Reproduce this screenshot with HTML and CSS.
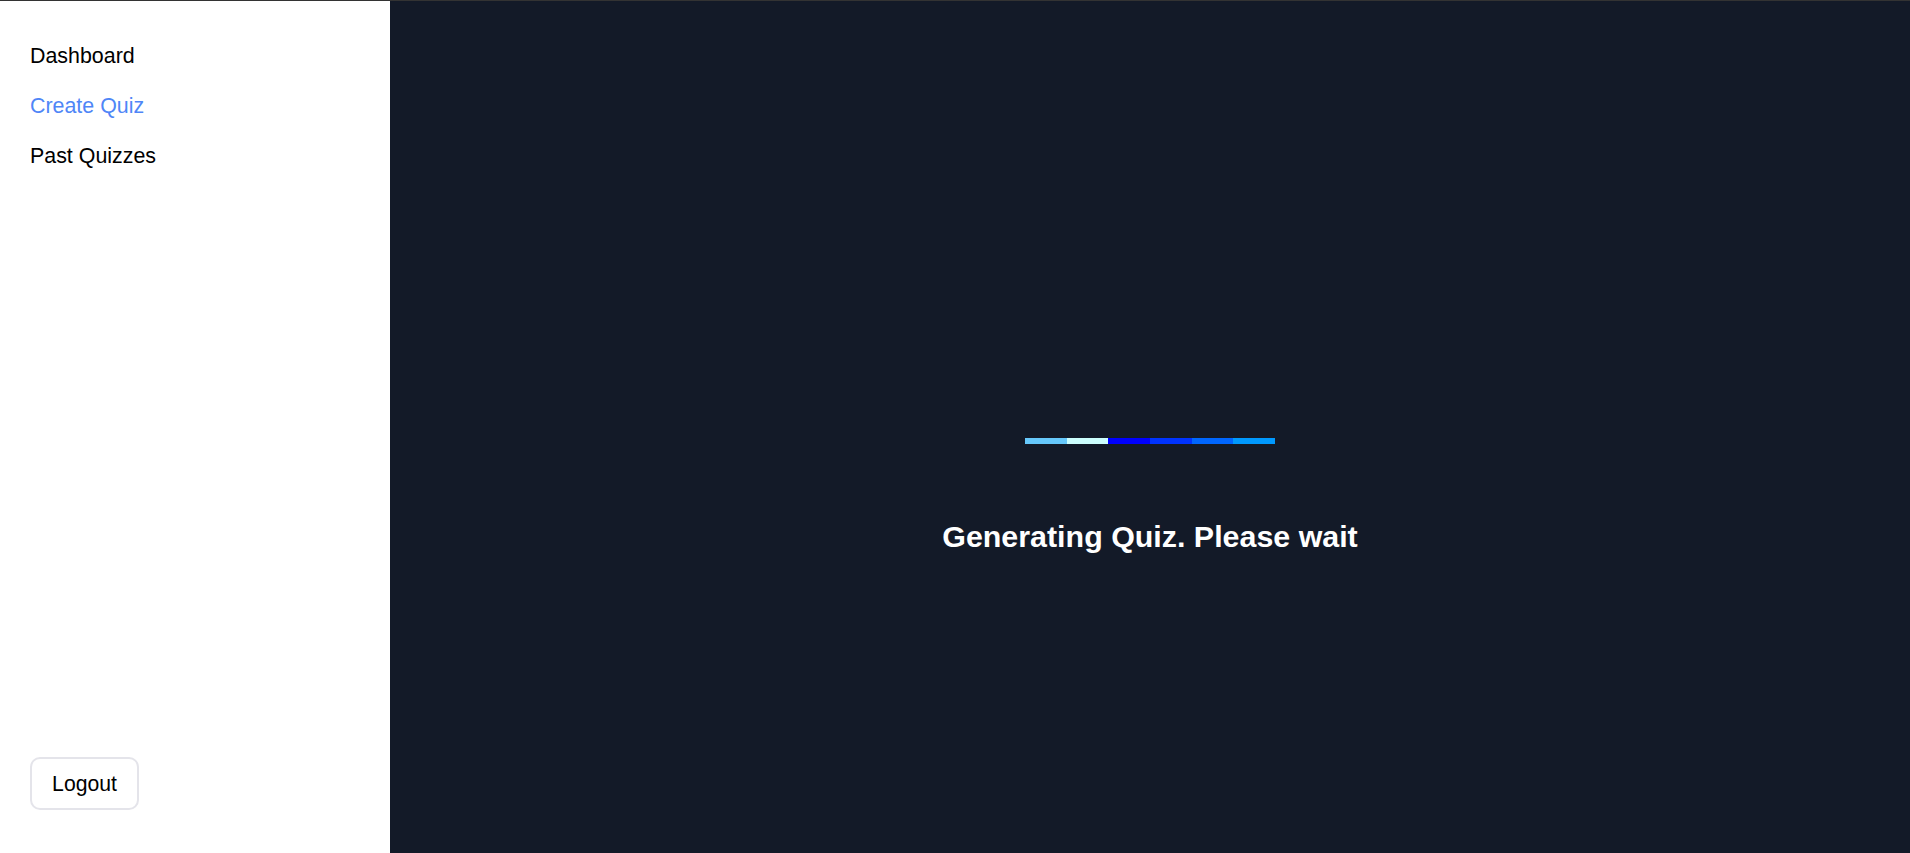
FILE: index.html
```html
<!DOCTYPE html>
<html lang="en">
<head>
<meta charset="utf-8">
<title>Create Quiz</title>
<link rel="stylesheet" href="styles.css">
</head>
<body>
<div class="app">
  <aside class="sidebar">
    <nav class="nav">
      <a class="nav-link" href="#">Dashboard</a>
      <a class="nav-link active" href="#">Create Quiz</a>
      <a class="nav-link" href="#">Past Quizzes</a>
    </nav>
    <button class="logout" type="button">Logout</button>
  </aside>
  <main class="main">
    <div class="loader">
      <span class="seg s1"></span><span class="seg s2"></span><span class="seg s3"></span><span class="seg s4"></span><span class="seg s5"></span><span class="seg s6"></span>
    </div>
    <h1 class="status">Generating Quiz. Please wait</h1>
  </main>
</div>
</body>
</html>
```
FILE: styles.css
```css
* { box-sizing: border-box; }
html, body { margin: 0; padding: 0; height: 100%; }
body {
  font-family: "Liberation Sans", Arial, sans-serif;
  background: #131a28;
  border-top: 1px solid #333333;
  overflow: hidden;
}
.app {
  display: flex;
  height: 852px;
}
.sidebar {
  width: 390px;
  flex-shrink: 0;
  background: #ffffff;
  display: flex;
  flex-direction: column;
  justify-content: space-between;
  padding: 43px 30px 43px 30px;
}
.nav {
  display: flex;
  flex-direction: column;
  gap: 26px;
}
.nav-link {
  font-size: 21.4px;
  line-height: 24px;
  color: #000000;
  text-decoration: none;
}
.nav-link.active { color: #4f86f7; }
.logout {
  align-self: flex-start;
  width: 109px;
  height: 53px;
  font-family: "Liberation Sans", Arial, sans-serif;
  font-size: 21.2px;
  color: #000000;
  background: #ffffff;
  border: 2px solid #e4e4ea;
  border-radius: 10px;
  padding: 0;
  cursor: pointer;
}
.main {
  flex: 1;
  display: flex;
  flex-direction: column;
  align-items: center;
  padding-top: 437px;
}
.loader {
  display: flex;
  width: 250px;
  height: 6px;
}
.seg { flex: 1; }
.s1 { background: #66c8fb; }
.s2 { background: #ccffff; }
.s3 { background: #0000ff; }
.s4 { background: #0033ff; }
.s5 { background: #0066ff; }
.s6 { background: #0099ff; }
.status {
  margin: 74px 0 0 0;
  font-size: 30.4px;
  line-height: 36px;
  font-weight: bold;
  color: #ffffff;
}
```
